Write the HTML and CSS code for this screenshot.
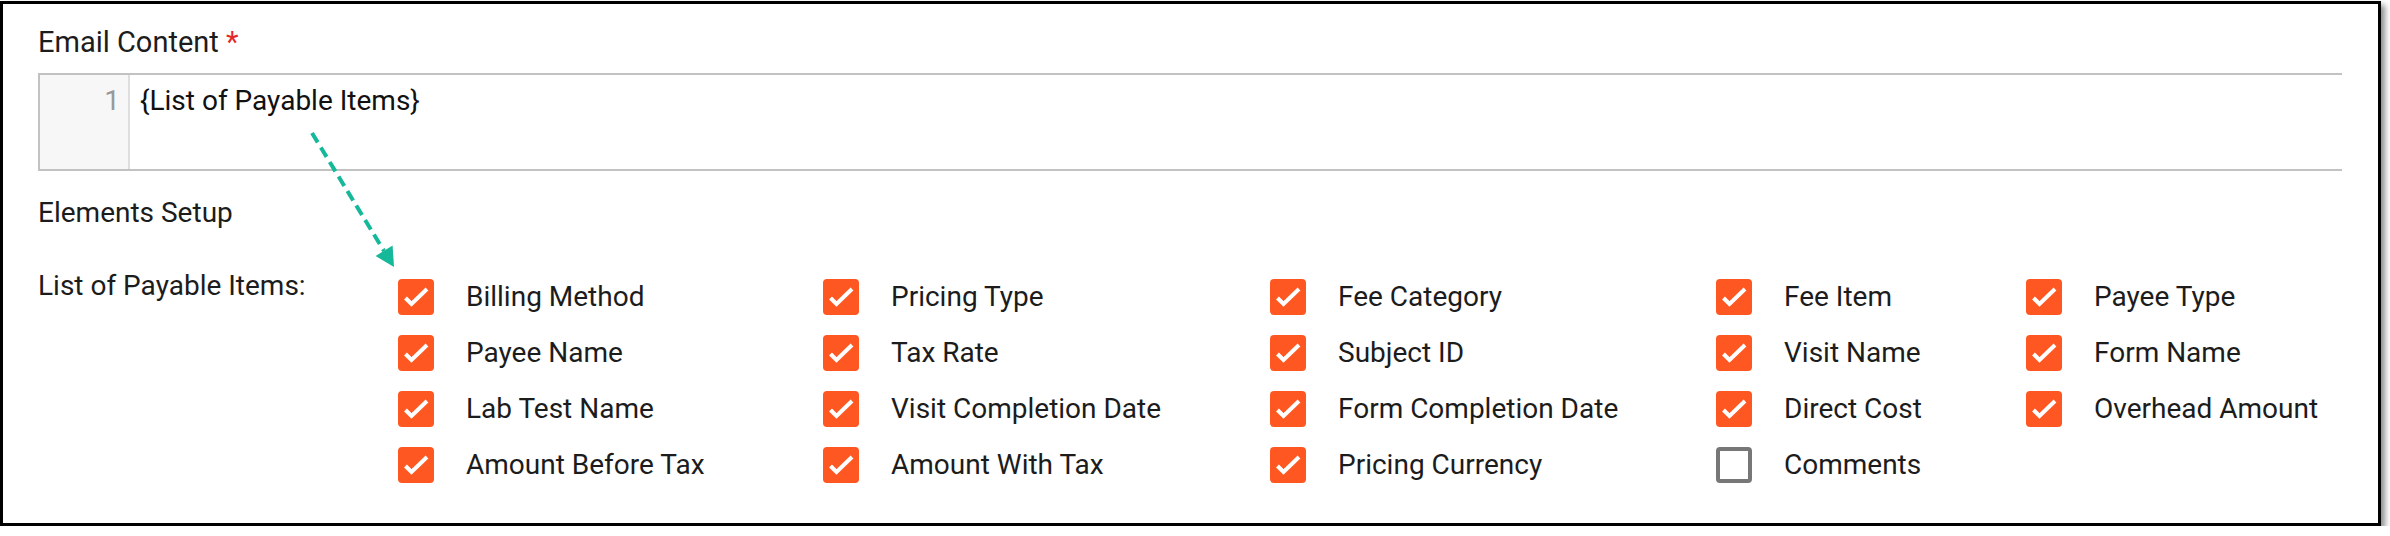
FILE: index.html
```html
<!DOCTYPE html>
<html>
  <head>
    <meta charset="UTF-8">
    <title>Email Content</title>
    <link rel="stylesheet" href="styles.css">
  </head>
  <body>
    <div class="frame">
      <div class="field-label">Email Content <span class="req">*</span></div>

      <div class="editor">
        <div class="gutter">1</div>
        <div class="code">{List of Payable Items}</div>
      </div>

      <div class="section-title">Elements Setup</div>

      <div class="payable">
        <div class="payable-label">List of Payable Items:</div>
        <div class="options">
          <!-- row 1 -->
          <label class="opt"><span class="box on"><svg viewBox="0 0 36 36"><polyline points="7.5,19 13.5,25 29,10"/></svg></span>Billing Method</label>
          <label class="opt"><span class="box on"><svg viewBox="0 0 36 36"><polyline points="7.5,19 13.5,25 29,10"/></svg></span>Pricing Type</label>
          <label class="opt"><span class="box on"><svg viewBox="0 0 36 36"><polyline points="7.5,19 13.5,25 29,10"/></svg></span>Fee Category</label>
          <label class="opt"><span class="box on"><svg viewBox="0 0 36 36"><polyline points="7.5,19 13.5,25 29,10"/></svg></span>Fee Item</label>
          <label class="opt"><span class="box on"><svg viewBox="0 0 36 36"><polyline points="7.5,19 13.5,25 29,10"/></svg></span>Payee Type</label>
          <!-- row 2 -->
          <label class="opt"><span class="box on"><svg viewBox="0 0 36 36"><polyline points="7.5,19 13.5,25 29,10"/></svg></span>Payee Name</label>
          <label class="opt"><span class="box on"><svg viewBox="0 0 36 36"><polyline points="7.5,19 13.5,25 29,10"/></svg></span>Tax Rate</label>
          <label class="opt"><span class="box on"><svg viewBox="0 0 36 36"><polyline points="7.5,19 13.5,25 29,10"/></svg></span>Subject ID</label>
          <label class="opt"><span class="box on"><svg viewBox="0 0 36 36"><polyline points="7.5,19 13.5,25 29,10"/></svg></span>Visit Name</label>
          <label class="opt"><span class="box on"><svg viewBox="0 0 36 36"><polyline points="7.5,19 13.5,25 29,10"/></svg></span>Form Name</label>
          <!-- row 3 -->
          <label class="opt"><span class="box on"><svg viewBox="0 0 36 36"><polyline points="7.5,19 13.5,25 29,10"/></svg></span>Lab Test Name</label>
          <label class="opt"><span class="box on"><svg viewBox="0 0 36 36"><polyline points="7.5,19 13.5,25 29,10"/></svg></span>Visit Completion Date</label>
          <label class="opt"><span class="box on"><svg viewBox="0 0 36 36"><polyline points="7.5,19 13.5,25 29,10"/></svg></span>Form Completion Date</label>
          <label class="opt"><span class="box on"><svg viewBox="0 0 36 36"><polyline points="7.5,19 13.5,25 29,10"/></svg></span>Direct Cost</label>
          <label class="opt"><span class="box on"><svg viewBox="0 0 36 36"><polyline points="7.5,19 13.5,25 29,10"/></svg></span>Overhead Amount</label>
          <!-- row 4 -->
          <label class="opt"><span class="box on"><svg viewBox="0 0 36 36"><polyline points="7.5,19 13.5,25 29,10"/></svg></span>Amount Before Tax</label>
          <label class="opt"><span class="box on"><svg viewBox="0 0 36 36"><polyline points="7.5,19 13.5,25 29,10"/></svg></span>Amount With Tax</label>
          <label class="opt"><span class="box on"><svg viewBox="0 0 36 36"><polyline points="7.5,19 13.5,25 29,10"/></svg></span>Pricing Currency</label>
          <label class="opt"><span class="box"></span>Comments</label>
        </div>
      </div>

      <!-- callout arrow from the placeholder to the checkboxes -->
      <svg class="callout" viewBox="0 0 120 160">
        <line x1="22" y1="13" x2="94" y2="131" />
        <polygon points="104,147 85.6,136 102.6,125.6" />
      </svg>
    </div>
  </body>
</html>
```

FILE: styles.css
```css
body {
  margin: 0;
  background: #fff;
  font-family: Roboto, "Liberation Sans", sans-serif;
  color: #1c1c1c;
}

.frame {
  position: relative;
  width: 2381px;
  height: 525px;
  margin-top: 1px;
  box-sizing: border-box;
  border: 3px solid #000;
  padding: 22px 36px 0 35px;
  background: #fff;
  box-shadow: 4px 4px 6px rgba(0, 0, 0, 0.45);
}

.field-label,
.section-title,
.payable-label,
.opt {
  font-size: 28px;
  line-height: 32px;
}

.field-label {
  font-size: 29px;
}

.req {
  color: #e3262a;
}

.editor {
  display: flex;
  height: 98px;
  box-sizing: border-box;
  margin-top: 15px;
  border: 2px solid #c2c2c2;
  border-right: 0;
}

.gutter {
  width: 90px;
  box-sizing: border-box;
  background: #f7f7f7;
  border-right: 2px solid #dedede;
  color: #999;
  text-align: right;
  padding: 10px 8px 0 0;
  font-size: 28px;
  line-height: 32px;
}

.code {
  padding: 10px 0 0 10px;
  font-size: 28px;
  line-height: 32px;
  color: #111;
}

.section-title {
  margin-top: 26px;
}

.payable {
  display: flex;
  margin-top: 41px;
}

.payable-label {
  width: 360px;
  flex: none;
}

.options {
  display: grid;
  grid-template-columns: 425px 447px 446px 310px auto;
  row-gap: 20px;
  margin-top: 9px;
}

.opt {
  display: flex;
  align-items: center;
  gap: 32px;
  height: 36px;
  white-space: nowrap;
}

.box {
  width: 36px;
  height: 36px;
  box-sizing: border-box;
  border: 4px solid #777;
  border-radius: 4px;
  flex: none;
}

.box.on {
  border: 0;
  background: #ff5722;
}

.box svg {
  display: block;
  width: 36px;
  height: 36px;
}

.box polyline {
  fill: none;
  stroke: #fff;
  stroke-width: 4;
}

.callout {
  position: absolute;
  left: 287px;
  top: 116px;
  width: 120px;
  height: 160px;
  overflow: visible;
}

.callout line {
  stroke: #16b89a;
  stroke-width: 4;
  stroke-dasharray: 11 6;
}

.callout polygon {
  fill: #16b89a;
}
```
